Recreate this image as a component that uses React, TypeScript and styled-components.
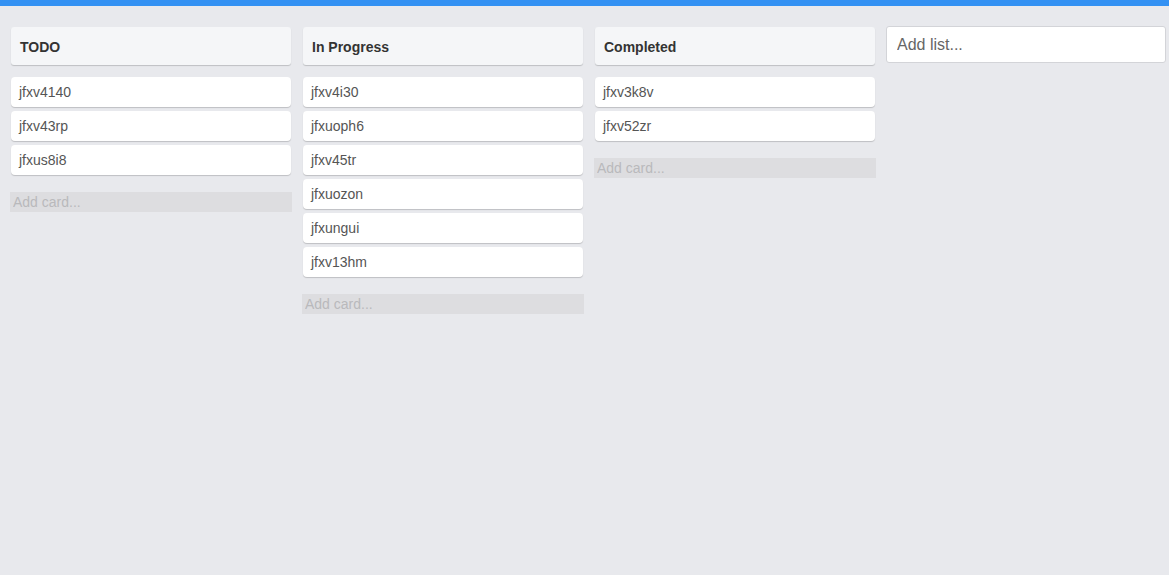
import React from 'react'
import styled, { createGlobalStyle } from 'styled-components'

const GlobalStyle = createGlobalStyle`
  html, body {
    margin: 0;
    padding: 0;
    background: #e8e9ed;
    font-family: "Liberation Sans", Arial, sans-serif;
  }
  * {
    box-sizing: border-box;
  }
`

const TopBar = styled.div`
  height: 6px;
  background: #3391f3;
`

const Board = styled.div`
  display: flex;
  align-items: flex-start;
  padding: 21px 0 0 5px;
  min-height: 569px;
  overflow: hidden;
`

const ListColumn = styled.div`
  flex-shrink: 0;
  width: 280px;
  margin: 0 6px;
  display: flex;
  flex-direction: column;
`

const ListHeader = styled.div`
  height: 38px;
  display: flex;
  align-items: center;
  padding: 2px 9px 0;
  background: #f5f6f8;
  border-radius: 3px;
  box-shadow: 0 1px 1px rgba(0, 0, 0, 0.18);
  font-size: 14px;
  font-weight: bold;
  color: #333;
`

const CardStack = styled.div`
  display: flex;
  flex-direction: column;
  gap: 4px;
  margin-top: 12px;
`

const Card = styled.div`
  height: 30px;
  display: flex;
  align-items: center;
  padding: 0 8px;
  background: #fff;
  border-radius: 4px;
  box-shadow: 0 1px 1px rgba(0, 0, 0, 0.18);
  font-size: 14px;
  color: #555;
`

const AddCardInput = styled.input`
  margin: 17px -1px 0;
  height: 20px;
  padding: 0 2px;
  border: 1px solid #dddde0;
  background: #dddde0;
  font-family: inherit;
  font-size: 14px;
  color: #555;
  outline: none;
  &::placeholder {
    color: #b9b9bc;
  }
`

const AddListInput = styled.input`
  flex-shrink: 0;
  width: 280px;
  height: 37px;
  margin: -1px 0 0 5px;
  padding: 0 10px;
  background: #fff;
  border: 1px solid #d3d4d8;
  border-radius: 3px;
  font-family: inherit;
  font-size: 16px;
  color: #555;
  outline: none;
  &::placeholder {
    color: #666;
  }
`

const lists = [
  { title: 'TODO', cards: ['jfxv4140', 'jfxv43rp', 'jfxus8i8'] },
  {
    title: 'In Progress',
    cards: ['jfxv4i30', 'jfxuoph6', 'jfxv45tr', 'jfxuozon', 'jfxungui', 'jfxv13hm'],
  },
  { title: 'Completed', cards: ['jfxv3k8v', 'jfxv52zr'] },
]

export default function App() {
  return (
    <>
      <GlobalStyle />
      <TopBar />
      <Board>
        {lists.map((list) => (
          <ListColumn key={list.title}>
            <ListHeader>{list.title}</ListHeader>
            <CardStack>
              {list.cards.map((c) => (
                <Card key={c}>{c}</Card>
              ))}
            </CardStack>
            <AddCardInput placeholder="Add card..." />
          </ListColumn>
        ))}
        <AddListInput placeholder="Add list..." />
      </Board>
    </>
  )
}
